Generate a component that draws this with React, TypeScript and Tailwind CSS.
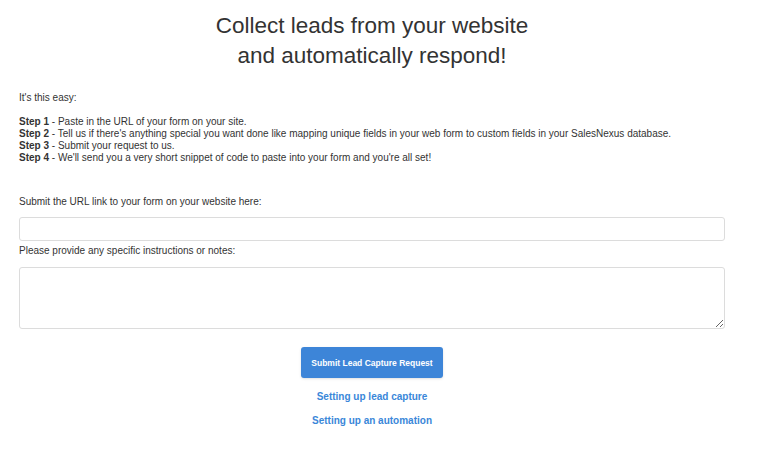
export default function App() {
  return (
    <div className="min-h-screen bg-white text-[#333] font-['Liberation_Sans',Arial,sans-serif]">
      <div className="ml-[19px] w-[706px] pt-[11px] pb-8">
        <h1 className="text-center text-[22.5px] leading-[30px] font-normal">
          Collect leads from your website
          <br />
          and automatically respond!
        </h1>

        <div className="mt-[21px] text-[10px] leading-[12px]">
          <p>It's this easy:</p>
          <br />
          <p>
            <b>Step 1</b> - Paste in the URL of your form on your site.
          </p>
          <p>
            <b>Step 2</b> - Tell us if there's anything special you want done like mapping unique fields in your web form to custom fields in your SalesNexus database.
          </p>
          <p>
            <b>Step 3</b> - Submit your request to us.
          </p>
          <p>
            <b>Step 4</b> - We'll send you a very short snippet of code to paste into your form and you're all set!
          </p>
        </div>

        <form className="mt-[32px] text-[10px] leading-[12px]" onSubmit={(e) => e.preventDefault()}>
          <label className="block">Submit the URL link to your form on your website here:</label>
          <input
            type="text"
            className="mt-[9px] block w-full h-[24px] rounded-[3px] border border-[#dcdcdc] bg-white px-2 outline-none"
          />
          <label className="mt-[4px] block">Please provide any specific instructions or notes:</label>
          <textarea className="mt-[10px] block w-full h-[62px] rounded-[3px] border border-[#dcdcdc] bg-white px-2 py-1 outline-none" />

          <div className="mt-[18px] flex flex-col items-center">
            <button
              type="submit"
              className="h-[31px] w-[142px] whitespace-nowrap rounded-[3px] bg-[#3d85d8] text-[8.5px] font-bold text-white shadow-sm"
            >
              Submit Lead Capture Request
            </button>
            <a href="#" className="mt-[13px] text-[10px] leading-[12px] font-bold text-[#3a87d9]">
              Setting up lead capture
            </a>
            <a href="#" className="mt-[12px] text-[10px] leading-[12px] font-bold text-[#3a87d9]">
              Setting up an automation
            </a>
          </div>
        </form>
      </div>
    </div>
  );
}
